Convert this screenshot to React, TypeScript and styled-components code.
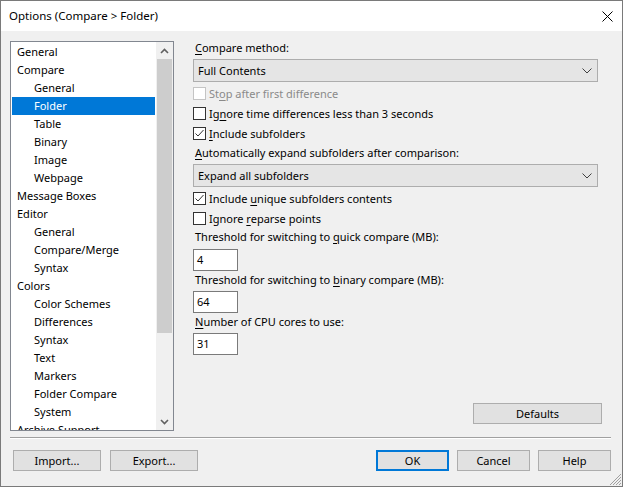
import React from "react";
import styled, { createGlobalStyle } from "styled-components";

const GlobalStyle = createGlobalStyle`
  html, body { margin: 0; padding: 0; background: #ffffff; }
  body { font-family: "Noto Sans", "Open Sans", sans-serif; font-size: 11px; color: #000; }
  * { box-sizing: border-box; }
`;

const Window = styled.div`
  position: relative;
  width: 623px;
  height: 487px;
  border: 1px solid #7a7a7a;
  display: flex;
  flex-direction: column;
  background: #f0f0f0;
  overflow: hidden;
`;

const TitleBar = styled.div`
  height: 30px;
  flex-shrink: 0;
  background: #ffffff;
  display: flex;
  align-items: center;
  justify-content: space-between;
  padding: 0 9px 0 8px;
`;

const Title = styled.span`
  font-size: 11.5px;
  line-height: 16px;
`;

const Client = styled.div`
  flex: 1;
  display: flex;
  flex-direction: column;
  padding: 10px 11px 0 9px;
`;

const TopRow = styled.div`
  display: flex;
  gap: 19px;
  height: 390px;
`;

const ListBox = styled.div`
  width: 164px;
  height: 390px;
  border: 1px solid #828790;
  background: #ffffff;
  display: flex;
  overflow: hidden;
`;

const ListItems = styled.ul`
  flex: 1;
  margin: 0;
  padding: 1px;
  list-style: none;
  overflow: hidden;
`;

const Item = styled.li<{ $level: number; $selected?: boolean }>`
  height: 18px;
  line-height: 18px;
  white-space: nowrap;
  padding-left: ${(p) => (p.$level ? 22 : 5)}px;
  background: ${(p) => (p.$selected ? "#0078d7" : "transparent")};
  color: ${(p) => (p.$selected ? "#ffffff" : "#000000")};
`;

const ScrollBar = styled.div`
  width: 17px;
  flex-shrink: 0;
  background: #f0f0f0;
  display: flex;
  flex-direction: column;
`;

const ScrollArrow = styled.div`
  height: 17px;
  flex-shrink: 0;
  display: flex;
  align-items: center;
  justify-content: center;
`;

const Track = styled.div`
  flex: 1;
  display: flex;
  flex-direction: column;
`;

const Thumb = styled.div`
  height: 274px;
  margin: 0 1px;
  background: #cdcdcd;
`;

const Panel = styled.div`
  flex: 1;
  display: flex;
  flex-direction: column;
`;

const Label = styled.div<{ $mt?: number }>`
  height: 16px;
  line-height: 16px;
  padding-left: 2px;
  margin-top: ${(p) => p.$mt ?? 0}px;
  white-space: nowrap;
`;

const Mn = styled.span`
  text-decoration: underline;
  text-underline-offset: 2px;
`;

const Combo = styled.div<{ $mt?: number }>`
  width: 405px;
  height: 23px;
  margin-top: ${(p) => p.$mt ?? 0}px;
  border: 1px solid #adadad;
  background: #e5e5e5;
  display: flex;
  align-items: center;
  justify-content: space-between;
  padding: 0 5px 0 4px;
`;

const CheckRow = styled.label<{ $mt?: number; $disabled?: boolean }>`
  height: 20px;
  margin-top: ${(p) => p.$mt ?? 0}px;
  display: flex;
  align-items: center;
  gap: 3px;
  color: ${(p) => (p.$disabled ? "#8a8a8a" : "#000000")};
  white-space: nowrap;
`;

const Box = styled.span<{ $disabled?: boolean }>`
  width: 13px;
  height: 13px;
  flex-shrink: 0;
  border: 1px solid ${(p) => (p.$disabled ? "#c4c4c4" : "#333333")};
  background: #ffffff;
  display: flex;
  align-items: center;
  justify-content: center;
`;

const NumInput = styled.div<{ $mt?: number }>`
  width: 45px;
  height: 22px;
  margin-top: ${(p) => p.$mt ?? 0}px;
  border: 1px solid #7a7a7a;
  background: #ffffff;
  padding-left: 3px;
  line-height: 20px;
`;

const Button = styled.button<{ $w: number; $default?: boolean }>`
  width: ${(p) => p.$w}px;
  height: 21px;
  padding: 0;
  font: inherit;
  color: #000;
  background: #e1e1e1;
  border: ${(p) => (p.$default ? "2px solid #0078d7" : "1px solid #adadad")};
  display: flex;
  align-items: center;
  justify-content: center;
`;

const DefaultsWrap = styled.div`
  margin-top: auto;
  margin-bottom: 7px;
  margin-right: 9px;
  align-self: flex-end;
`;

const Separator = styled.div`
  margin-top: 6px;
  height: 2px;
  border-top: 1px solid #a0a0a0;
  border-bottom: 1px solid #ffffff;
`;

const ButtonRow = styled.div`
  margin-top: 11px;
  display: flex;
  align-items: center;
  padding-left: 3px;
`;

const Group = styled.div<{ $gap: number }>`
  display: flex;
  gap: ${(p) => p.$gap}px;
`;

const Spacer = styled.div`
  flex: 1;
`;

const Grip = styled.svg`
  position: absolute;
  right: 0;
  bottom: 0;
`;

const items: { text: string; level: number; selected?: boolean }[] = [
  { text: "General", level: 0 },
  { text: "Compare", level: 0 },
  { text: "General", level: 1 },
  { text: "Folder", level: 1, selected: true },
  { text: "Table", level: 1 },
  { text: "Binary", level: 1 },
  { text: "Image", level: 1 },
  { text: "Webpage", level: 1 },
  { text: "Message Boxes", level: 0 },
  { text: "Editor", level: 0 },
  { text: "General", level: 1 },
  { text: "Compare/Merge", level: 1 },
  { text: "Syntax", level: 1 },
  { text: "Colors", level: 0 },
  { text: "Color Schemes", level: 1 },
  { text: "Differences", level: 1 },
  { text: "Syntax", level: 1 },
  { text: "Text", level: 1 },
  { text: "Markers", level: 1 },
  { text: "Folder Compare", level: 1 },
  { text: "System", level: 1 },
  { text: "Archive Support", level: 0 },
];

const Chevron = ({ up }: { up?: boolean }) => (
  <svg width="9" height="6" viewBox="0 0 9 6">
    <polyline
      points={up ? "1,5 4.5,1.5 8,5" : "1,1 4.5,4.5 8,1"}
      fill="none"
      stroke="#606060"
      strokeWidth="1.6"
    />
  </svg>
);

const ComboChevron = () => (
  <svg width="10" height="6" viewBox="0 0 10 6">
    <polyline points="0.5,0.5 5,5 9.5,0.5" fill="none" stroke="#404040" strokeWidth="1" />
  </svg>
);

const Check = ({ checked, disabled }: { checked?: boolean; disabled?: boolean }) => (
  <Box $disabled={disabled}>
    {checked && (
      <svg width="11" height="11" viewBox="0 0 11 11">
        <polyline points="1.5,5.5 4,8 9.5,2" fill="none" stroke="#333333" strokeWidth="1" />
      </svg>
    )}
  </Box>
);

export default function App() {
  return (
    <>
      <GlobalStyle />
      <Window>
        <TitleBar>
          <Title>Options (Compare &gt; Folder)</Title>
          <svg width="11" height="11" viewBox="0 0 11 11">
            <line x1="0.5" y1="0.5" x2="10.5" y2="10.5" stroke="#000" strokeWidth="1" />
            <line x1="10.5" y1="0.5" x2="0.5" y2="10.5" stroke="#000" strokeWidth="1" />
          </svg>
        </TitleBar>
        <Client>
          <TopRow>
            <ListBox>
              <ListItems>
                {items.map((it, i) => (
                  <Item key={i} $level={it.level} $selected={it.selected}>
                    {it.text}
                  </Item>
                ))}
              </ListItems>
              <ScrollBar>
                <ScrollArrow>
                  <Chevron up />
                </ScrollArrow>
                <Track>
                  <Thumb />
                </Track>
                <ScrollArrow>
                  <Chevron />
                </ScrollArrow>
              </ScrollBar>
            </ListBox>
            <Panel>
              <Label $mt={-1}>
                <Mn>C</Mn>ompare method:
              </Label>
              <Combo $mt={3}>
                <span>Full Contents</span>
                <ComboChevron />
              </Combo>
              <CheckRow $mt={1} $disabled>
                <Check disabled />
                <span>
                  St<Mn>o</Mn>p after first difference
                </span>
              </CheckRow>
              <CheckRow>
                <Check />
                <span>
                  Ig<Mn>n</Mn>ore time differences less than 3 seconds
                </span>
              </CheckRow>
              <CheckRow>
                <Check checked />
                <span>
                  <Mn>I</Mn>nclude subfolders
                </span>
              </CheckRow>
              <Label $mt={2}>
                <Mn>A</Mn>utomatically expand subfolders after comparison:
              </Label>
              <Combo $mt={3}>
                <span>Expand all subfolders</span>
                <ComboChevron />
              </Combo>
              <CheckRow $mt={1}>
                <Check checked />
                <span>
                  Include <Mn>u</Mn>nique subfolders contents
                </span>
              </CheckRow>
              <CheckRow>
                <Check />
                <span>
                  Ignore <Mn>r</Mn>eparse points
                </span>
              </CheckRow>
              <Label $mt={1}>
                Threshold for switching to <Mn>q</Mn>uick compare (MB):
              </Label>
              <NumInput $mt={4}>4</NumInput>
              <Label $mt={1}>
                Threshold for switching to <Mn>b</Mn>inary compare (MB):
              </Label>
              <NumInput $mt={3}>64</NumInput>
              <Label $mt={1}>
                <Mn>N</Mn>umber of CPU cores to use:
              </Label>
              <NumInput $mt={3}>31</NumInput>
              <DefaultsWrap>
                <Button $w={129}>Defaults</Button>
              </DefaultsWrap>
            </Panel>
          </TopRow>
          <Separator />
          <ButtonRow>
            <Group $gap={9}>
              <Button $w={88}>Import...</Button>
              <Button $w={88}>Export...</Button>
            </Group>
            <Spacer />
            <Group $gap={8}>
              <Button $w={73} $default>
                OK
              </Button>
              <Button $w={73}>Cancel</Button>
              <Button $w={73}>Help</Button>
            </Group>
          </ButtonRow>
        </Client>
        <Grip width="13" height="13" viewBox="0 0 13 13">
          <line x1="12" y1="1" x2="1" y2="12" stroke="#a0a0a0" strokeWidth="1" />
          <line x1="12" y1="4" x2="4" y2="12" stroke="#a0a0a0" strokeWidth="1" />
          <line x1="12" y1="7" x2="7" y2="12" stroke="#a0a0a0" strokeWidth="1" />
          <line x1="12" y1="10" x2="10" y2="12" stroke="#a0a0a0" strokeWidth="1" />
        </Grip>
      </Window>
    </>
  );
}
